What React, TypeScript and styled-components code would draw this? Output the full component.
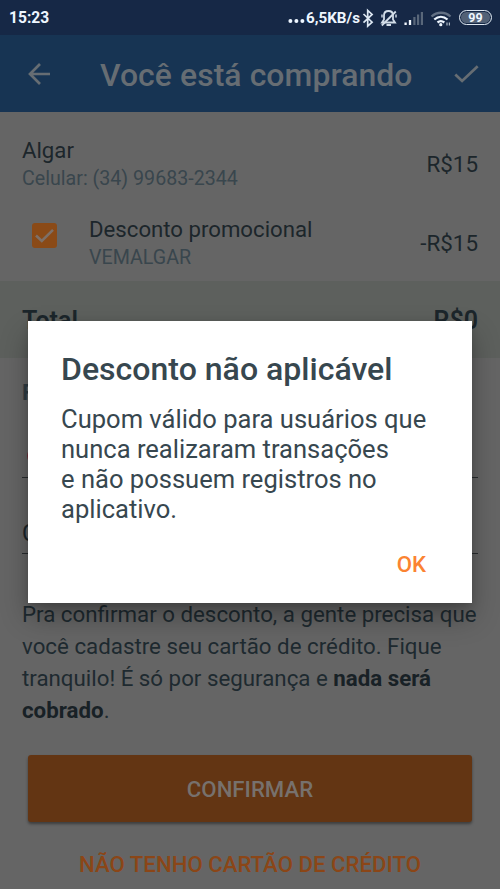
import React from "react";
import styled, { createGlobalStyle } from "styled-components";

const GlobalStyle = createGlobalStyle`
  * { box-sizing: border-box; }
  body { margin: 0; background: #656565; font-family: Roboto, "Noto Sans", sans-serif; }
  p, h1, h2 { margin: 0; }
  button { border: 0; padding: 0; background: none; font-family: inherit; }
`;

const Screen = styled.main`
  position: relative;
  display: flex;
  flex-direction: column;
  width: 500px;
  height: 889px;
  overflow: hidden;
  background: #656565;
  color: #1c262b;
`;

const StatusBar = styled.div`
  display: flex;
  align-items: center;
  justify-content: space-between;
  height: 35px;
  flex: none;
  padding: 0 8px 0 9px;
  background: #162846;
  color: #eef6ff;
`;

const Clock = styled.span`
  padding-top: 2px;
  font-size: 15.6px;
  font-weight: 700;
  line-height: 35px;
`;

const Indicators = styled.svg`
  display: block;
  flex: none;
`;

const StatusRight = styled.div`
  display: flex;
  align-items: center;
`;

const Speed = styled.span`
  padding-top: 2px;
  font-size: 15.2px;
  font-weight: 700;
  line-height: 35px;
`;

const Battery = styled.span`
  display: flex;
  align-items: center;
  justify-content: center;
  width: 33px;
  height: 15px;
  border: 1.5px solid #dbe5ef;
  border-radius: 8px;
  background: #526176;
  box-shadow: inset 0 0 0 1px #162846;
  font-size: 12.5px;
  font-weight: 700;
  line-height: 12px;
`;

const Header = styled.header`
  display: flex;
  align-items: center;
  height: 77px;
  flex: none;
  padding: 0 20px 0 28px;
  background: #173453;
  color: #666d73;
`;

const Title = styled.h1`
  flex: 1;
  margin-left: 49px;
  padding-top: 3px;
  font-size: 31.9px;
  font-weight: 500;
  line-height: 40px;
  letter-spacing: 0.08px;
  white-space: nowrap;
`;

const Items = styled.section`
  display: flex;
  flex-direction: column;
  height: 169px;
  flex: none;
  padding: 23px 22px 0;
`;

const ItemRow = styled.div`
  display: flex;
  align-items: flex-start;
  flex: none;
  height: 78.5px;
`;

const ItemText = styled.div<{ $indent?: boolean }>`
  flex: 1;
  margin-left: ${(p) => (p.$indent ? "32px" : "0")};
`;

const ItemName = styled.p`
  font-size: 22.2px;
  line-height: 30px;
`;

const ItemDetail = styled.p`
  font-size: 19.65px;
  line-height: 28px;
  color: #39464d;
`;

const Price = styled.span`
  margin-top: 14px;
  font-size: 22.4px;
  line-height: 30px;
`;

const Checkbox = styled.span`
  display: flex;
  align-items: center;
  justify-content: center;
  width: 25px;
  height: 25px;
  margin: 9.5px 0 0 10px;
  border-radius: 3px;
  background: #8a4a17;
`;

const TotalRow = styled.div`
  display: flex;
  justify-content: space-between;
  height: 77px;
  flex: none;
  padding: 25px 22px 0;
  background: #5d605d;
  font-size: 25px;
  font-weight: 600;
  line-height: 30px;
`;

const Form = styled.section`
  flex: none;
  height: 240px;
  padding: 18px 22px 0;
`;

const Label = styled.p`
  height: 50px;
  font-size: 22px;
  font-weight: 700;
  line-height: 34px;
  color: #303c43;
`;

const Field = styled.div<{ $height: number; $top: number }>`
  height: ${(p) => p.$height}px;
  padding-top: ${(p) => p.$top}px;
  border-bottom: 1px solid #292c2e;
  font-size: 23px;
  line-height: 30px;
`;

const CardMark = styled.span`
  display: block;
  width: 16px;
  height: 16px;
  margin-left: 4.5px;
  border-radius: 50%;
  background: #712c37;
`;

const Notice = styled.p`
  flex: none;
  height: 157px;
  padding: 0 22px;
  font-size: 22.3px;
  line-height: 32px;
  color: #1e2a30;
  white-space: nowrap;

  b { color: #182126; }
`;

const ConfirmButton = styled.button`
  flex: none;
  height: 67px;
  margin: 0 28px;
  border-radius: 3px;
  background: #633513;
  box-shadow: 0 2px 3px rgba(0, 0, 0, 0.4);
  color: #77716d;
  font-size: 22.2px;
  font-weight: 500;
`;

const TextButton = styled.button`
  flex: none;
  margin-top: 27px;
  color: #8b4617;
  font-size: 22.2px;
  font-weight: 500;
  line-height: 30px;
  white-space: nowrap;
`;

const DialogLayer = styled.div`
  position: absolute;
  inset: 0;
  display: flex;
  align-items: flex-start;
  justify-content: center;
  padding-top: 321px;
`;

const Dialog = styled.div`
  display: flex;
  flex-direction: column;
  width: 444px;
  height: 282px;
  padding: 28px 33px 0;
  background: #fff;
  box-shadow: 0 14px 26px rgba(0, 0, 0, 0.3), 0 2px 8px rgba(0, 0, 0, 0.15);
  color: #37474f;
`;

const DialogTitle = styled.h2`
  font-size: 32.05px;
  font-weight: 500;
  line-height: 41px;
  white-space: nowrap;
`;

const DialogText = styled.p`
  margin-top: 14px;
  font-size: 25.55px;
  line-height: 30px;
  white-space: nowrap;
`;

const DialogAction = styled.button`
  align-self: flex-end;
  margin: 25px 13px 0 0;
  color: #fb8332;
  font-size: 22.2px;
  font-weight: 500;
  line-height: 30px;
`;

const StatusIcons = () => (
  <Indicators width="99" height="24" viewBox="360 5 99 24" fill="none">
    <path d="M363.5 13l8.6 8.2-4.4 4V9.4l4.4 4-8.6 8.2" stroke="#dce7f2" strokeWidth="1.7" />
    <g stroke="#d2dde8" strokeWidth="1.8">
      <path d="M382 21.5h13l-2-3v-4c0-3-1.7-4.5-4.5-4.5s-4.5 1.5-4.5 4.5v4z" />
      <path d="M386.5 24h4.5M395.8 10.5l-14 14" />
      <path d="M382 13.5v3M396 13.5v3" strokeWidth="1.4" />
    </g>
    <g stroke="#59677a" strokeWidth="2.2">
      <path d="M414.4 24v-8M418.1 24V13.5M421.9 24V11" />
    </g>
    <path d="M405.6 24v-2.5M410 24v-5" stroke="#f2f8ff" strokeWidth="2.3" />
    <g strokeWidth="2.3">
      <path d="M431.5 15.5c5.5-5 13.5-5 19 0" stroke="#627084" />
      <path d="M434.3 18.5c4-3.5 9.2-3.5 13.2 0M437.5 21.5c2.2-1.8 4.6-1.8 6.8 0" stroke="#eef6ff" />
    </g>
    <circle cx="440.8" cy="23.7" r="1.6" fill="#eef6ff" />
    <path d="M447 21.5v3M449.4 21.5v3" stroke="#aebbc8" strokeWidth="1.2" />
  </Indicators>
);

export default function App() {
  return (
    <>
      <GlobalStyle />
      <Screen>
        <StatusBar>
          <Clock>15:23</Clock>
          <StatusRight>
            <Indicators width="18" height="11" viewBox="0 0 18 11" fill="#eef6ff">
              <circle cx="2.4" cy="9" r="2" />
              <circle cx="8.4" cy="9" r="2" />
              <circle cx="14.4" cy="9" r="2" />
            </Indicators>
            <Speed>6,5KB/s</Speed>
            <StatusIcons />
            <Battery>99</Battery>
          </StatusRight>
        </StatusBar>
        <Header>
          <svg width="23" height="24" viewBox="0 0 23 24" fill="none" stroke="currentColor" strokeWidth="2.7">
            <path d="M12 2L2 12l10 10M2 12h20" />
          </svg>
          <Title>Você está comprando</Title>
          <svg width="27" height="22" viewBox="0 0 27 22" fill="none" stroke="currentColor" strokeWidth="2.7">
            <path d="M2.3 11.5l6.8 6.5L24.7 3.2" />
          </svg>
        </Header>
        <Items>
          <ItemRow>
            <ItemText>
              <ItemName>Algar</ItemName>
              <ItemDetail>Celular: (34) 99683-2344</ItemDetail>
            </ItemText>
            <Price>R$15</Price>
          </ItemRow>
          <ItemRow>
            <Checkbox>
              <svg width="19" height="15" viewBox="0 0 19 15" fill="none" stroke="#7d7068" strokeWidth="2.6">
                <path d="M1 7.5l5.8 5.4L18 1.8" />
              </svg>
            </Checkbox>
            <ItemText $indent>
              <ItemName>Desconto promocional</ItemName>
              <ItemDetail>VEMALGAR</ItemDetail>
            </ItemText>
            <Price>-R$15</Price>
          </ItemRow>
        </Items>
        <TotalRow>
          <span>Total</span>
          <span>R$0</span>
        </TotalRow>
        <Form>
          <Label>F</Label>
          <Field $height={52} $top={22}>
            <CardMark />
          </Field>
          <Field $height={76} $top={41}>
            <span>C</span>
          </Field>
        </Form>
        <Notice>
          Pra confirmar o desconto, a gente precisa que
          <br />
          você cadastre seu cartão de crédito. Fique
          <br />
          tranquilo! É só por segurança e <b>nada será</b>
          <br />
          <b>cobrado</b>.
        </Notice>
        <ConfirmButton>CONFIRMAR</ConfirmButton>
        <TextButton>NÃO TENHO CARTÃO DE CRÉDITO</TextButton>
        <DialogLayer>
          <Dialog role="dialog" aria-modal="true">
            <DialogTitle>Desconto não aplicável</DialogTitle>
            <DialogText>
              Cupom válido para usuários que
              <br />
              nunca realizaram transações
              <br />e não possuem registros no
              <br />
              aplicativo.
            </DialogText>
            <DialogAction>OK</DialogAction>
          </Dialog>
        </DialogLayer>
      </Screen>
    </>
  );
}
